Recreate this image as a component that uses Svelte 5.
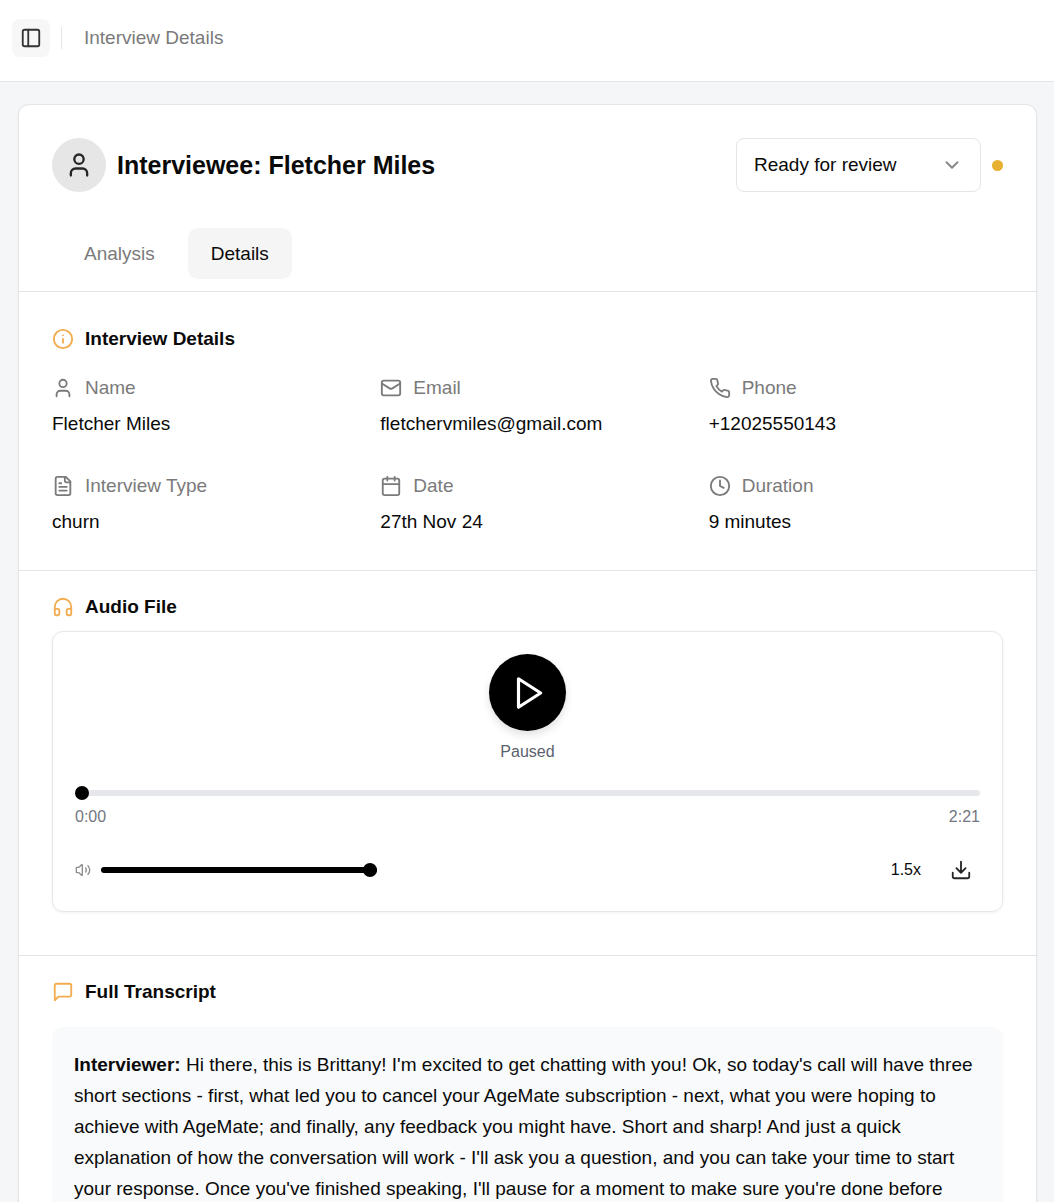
<script>
  const details = [
    { icon: 'user', label: 'Name', value: 'Fletcher Miles' },
    { icon: 'mail', label: 'Email', value: 'fletchervmiles@gmail.com' },
    { icon: 'phone', label: 'Phone', value: '+12025550143' },
    { icon: 'file', label: 'Interview Type', value: 'churn' },
    { icon: 'calendar', label: 'Date', value: '27th Nov 24' },
    { icon: 'clock', label: 'Duration', value: '9 minutes' }
  ];
  const tabs = ['Analysis', 'Details'];

  let activeTab = $state('Details');
  let status = $state('Ready for review');
  let playing = $state(false);
  let position = $state(0);
  let volume = $state(100);
</script>

{#snippet icon(name, size = 'md')}
  <svg class="icon {size}" viewBox="0 0 24 24" aria-hidden="true">
    {#if name === 'panel'}
      <rect x="3" y="3" width="18" height="18" rx="2" />
      <path d="M9 3v18" />
    {:else if name === 'user'}
      <path d="M19 21v-2a4 4 0 0 0-4-4H9a4 4 0 0 0-4 4v2" />
      <circle cx="12" cy="7" r="4" />
    {:else if name === 'mail'}
      <rect x="2" y="4" width="20" height="16" rx="2" />
      <path d="m22 7-8.97 5.7a1.94 1.94 0 0 1-2.06 0L2 7" />
    {:else if name === 'phone'}
      <path d="M22 16.92v3a2 2 0 0 1-2.18 2 19.79 19.79 0 0 1-8.63-3.07 19.5 19.5 0 0 1-6-6 19.79 19.79 0 0 1-3.07-8.67A2 2 0 0 1 4.11 2h3a2 2 0 0 1 2 1.72 12.84 12.84 0 0 0 .7 2.81 2 2 0 0 1-.45 2.11L8.09 9.91a16 16 0 0 0 6 6l1.27-1.27a2 2 0 0 1 2.11-.45 12.84 12.84 0 0 0 2.81.7A2 2 0 0 1 22 16.92z" />
    {:else if name === 'file'}
      <path d="M15 2H6a2 2 0 0 0-2 2v16a2 2 0 0 0 2 2h12a2 2 0 0 0 2-2V7Z" />
      <path d="M14 2v4a2 2 0 0 0 2 2h4M10 9H8M16 13H8M16 17H8" />
    {:else if name === 'calendar'}
      <rect x="3" y="4" width="18" height="18" rx="2" />
      <path d="M8 2v4M16 2v4M3 10h18" />
    {:else if name === 'clock'}
      <circle cx="12" cy="12" r="10" />
      <path d="M12 6v6l4 2" />
    {:else if name === 'info'}
      <circle cx="12" cy="12" r="10" />
      <path d="M12 16v-4M12 8h.01" />
    {:else if name === 'headphones'}
      <path d="M3 14h3a2 2 0 0 1 2 2v3a2 2 0 0 1-2 2H5a2 2 0 0 1-2-2v-7a9 9 0 0 1 18 0v7a2 2 0 0 1-2 2h-1a2 2 0 0 1-2-2v-3a2 2 0 0 1 2-2h3" />
    {:else if name === 'message'}
      <path d="M21 15a2 2 0 0 1-2 2H7l-4 4V5a2 2 0 0 1 2-2h14a2 2 0 0 1 2 2z" />
    {:else if name === 'play'}
      <path d="m6 3 14 9-14 9z" />
    {:else if name === 'pause'}
      <path d="M8 4v16M16 4v16" />
    {:else if name === 'volume'}
      <path d="M11 4.7a.7.7 0 0 0-1.2-.5L6.4 7.6A1.4 1.4 0 0 1 5.4 8H3a1 1 0 0 0-1 1v6a1 1 0 0 0 1 1h2.4a1.4 1.4 0 0 1 1 .4l3.4 3.4a.7.7 0 0 0 1.2-.5z" />
      <path d="M16 9a5 5 0 0 1 0 6M19.4 18.4a9 9 0 0 0 0-12.8" />
    {:else if name === 'download'}
      <path d="M21 15v4a2 2 0 0 1-2 2H5a2 2 0 0 1-2-2v-4M7 10l5 5 5-5M12 15V3" />
    {:else if name === 'chevron'}
      <path d="m6 9 6 6 6-6" />
    {/if}
  </svg>
{/snippet}

<div class="shell">
  <header class="topbar">
    <button class="toggle" type="button" aria-label="Toggle sidebar">{@render icon('panel')}</button>
    <span class="divider"></span>
    <span class="crumb">Interview Details</span>
  </header>

  <main>
    <article class="card">
      <div class="card-head">
        <div class="identity">
          <span class="avatar">{@render icon('user', 'lg')}</span>
          <h1>Interviewee: Fletcher Miles</h1>
          <div class="status">
            <select aria-label="Review status" bind:value={status}>
              <option>Ready for review</option>
              <option>Reviewed</option>
            </select>
            <span class="chevron">{@render icon('chevron')}</span>
          </div>
          <span class="dot"></span>
        </div>
        <div class="tabs" role="tablist">
          {#each tabs as tab}
            <button
              type="button"
              role="tab"
              aria-selected={activeTab === tab}
              class:active={activeTab === tab}
              onclick={() => (activeTab = tab)}>{tab}</button>
          {/each}
        </div>
      </div>

      <section class="details">
        <h2>{@render icon('info')}Interview Details</h2>
        <dl>
          {#each details as item}
            <div>
              <dt>{@render icon(item.icon)}{item.label}</dt>
              <dd>{item.value}</dd>
            </div>
          {/each}
        </dl>
      </section>

      <section class="audio">
        <h2>{@render icon('headphones')}Audio File</h2>
        <div class="player">
          <div class="playback">
            <button class="play" type="button" aria-label={playing ? 'Pause' : 'Play'} onclick={() => (playing = !playing)}>
              {@render icon(playing ? 'pause' : 'play', 'xl')}
            </button>
            <span>{playing ? 'Playing' : 'Paused'}</span>
          </div>
          <div class="progress">
            <input type="range" aria-label="Position" min="0" max="141" bind:value={position} />
            <div class="times"><span>0:00</span><span>2:21</span></div>
          </div>
          <div class="controls">
            <label class="volume">
              {@render icon('volume', 'sm')}
              <input class="filled" type="range" aria-label="Volume" min="0" max="100" bind:value={volume} style:--level="{volume}%" />
            </label>
            <button class="speed" type="button">1.5x</button>
            <button class="download" type="button" aria-label="Download">{@render icon('download')}</button>
          </div>
        </div>
      </section>

      <section class="transcript">
        <h2>{@render icon('message')}Full Transcript</h2>
        <div class="speech">
          <p>
            <strong>Interviewer:</strong> Hi there, this is Brittany! I'm excited to get chatting with you! Ok, so today's
            call will have three short sections - first, what led you to cancel your AgeMate subscription - next, what you
            were hoping to achieve with AgeMate; and finally, any feedback you might have. Short and sharp! And just a quick
            explanation of how the conversation will work - I'll ask you a question, and you can take your time to start
            your response. Once you've finished speaking, I'll pause for a moment to make sure you're done before
          </p>
        </div>
      </section>
    </article>
  </main>
</div>

<style>
  :global(body) {
    background: #f5f6f8;
  }

  .shell {
    height: 100vh;
    overflow: hidden;
    color: #0a0a0a;
    background: #f5f6f8;
    font: 19px/28px 'Liberation Sans', Arial, sans-serif;
  }

  h1,
  h2,
  p,
  dl,
  dd {
    margin: 0;
  }

  button,
  select {
    margin: 0;
    padding: 0;
    border: 0;
    color: inherit;
    background: none;
    font: inherit;
    cursor: pointer;
  }

  .icon {
    display: block;
    flex: none;
    width: 22px;
    height: 22px;
    fill: none;
    stroke: currentColor;
    stroke-width: 2;
    stroke-linecap: round;
    stroke-linejoin: round;
  }

  .icon.sm {
    width: 16px;
    height: 16px;
  }

  .icon.lg {
    width: 28px;
    height: 28px;
  }

  .icon.xl {
    width: 38px;
    height: 38px;
  }

  .topbar {
    display: flex;
    align-items: center;
    padding: 19px 12px 24px;
    border-bottom: 1px solid #e3e5e8;
    background: #fff;
  }

  .toggle {
    display: grid;
    place-items: center;
    width: 38px;
    height: 38px;
    border-radius: 8px;
    color: #333;
    background: #f7f7f7;
  }

  .divider {
    width: 1px;
    height: 22px;
    margin: 0 22px 0 11px;
    background: #e5e5e5;
  }

  .crumb {
    color: #7a7a7a;
  }

  main {
    padding: 22px 17px 22px 18px;
  }

  .card {
    border: 1px solid #e4e5e7;
    border-radius: 11px;
    background: #fff;
    box-shadow: 0 1px 3px rgb(0 0 0 / 5%);
  }

  .card-head {
    padding: 33px 33px 12px;
  }

  .identity {
    display: flex;
    align-items: center;
    gap: 11px;
  }

  .avatar {
    display: grid;
    place-items: center;
    width: 54px;
    height: 54px;
    border-radius: 50%;
    color: #262626;
    background: #e6e6e6;
  }

  h1 {
    flex: 1;
    font-size: 25px;
    line-height: 34px;
    font-weight: 700;
  }

  .status {
    position: relative;
    width: 245px;
  }

  .status select {
    display: block;
    width: 100%;
    height: 54px;
    padding: 0 44px 0 17px;
    border: 1px solid #e5e5e5;
    border-radius: 8px;
    background: #fff;
    appearance: none;
  }

  .chevron {
    position: absolute;
    top: 16px;
    right: 18px;
    color: #858585;
    pointer-events: none;
  }

  .dot {
    width: 11px;
    height: 11px;
    border-radius: 50%;
    background: #e8b030;
  }

  .tabs {
    display: flex;
    gap: 10px;
    margin-top: 36px;
    padding: 0 9px;
  }

  .tabs button {
    height: 51px;
    padding: 0 23px;
    border-radius: 10px;
    color: #7a7a7a;
  }

  .tabs .active {
    color: #0a0a0a;
    background: #f5f5f5;
  }

  section {
    padding: 22px 33px;
    border-top: 1px solid #e4e4e4;
  }

  h2 {
    display: flex;
    align-items: center;
    gap: 11px;
    font-size: 19px;
    line-height: 28px;
    font-weight: 700;
  }

  h2 .icon {
    color: #f2ac4f;
  }

  .details {
    padding: 33px 33px 34px;
  }

  dl {
    display: grid;
    grid-template-columns: repeat(3, 1fr);
    gap: 34px;
    margin-top: 21px;
  }

  dt {
    display: flex;
    align-items: center;
    gap: 11px;
    color: #7a7a7a;
  }

  dd {
    margin-top: 8px;
  }

  .audio {
    padding-bottom: 43px;
  }

  .player {
    display: flex;
    flex-direction: column;
    gap: 23px;
    margin-top: 10px;
    padding: 22px;
    border: 1px solid #e5e7eb;
    border-radius: 11px;
    box-shadow: 0 1px 3px rgb(0 0 0 / 6%);
    font-size: 16px;
    line-height: 22px;
  }

  .playback {
    display: flex;
    flex-direction: column;
    align-items: center;
    gap: 10px;
    color: #5b616c;
  }

  .play {
    display: grid;
    place-items: center;
    width: 77px;
    height: 77px;
    border-radius: 50%;
    color: #fff;
    background: #000;
    box-shadow: 0 4px 8px rgb(0 0 0 / 12%);
  }

  input[type='range'] {
    display: block;
    width: 100%;
    height: 14px;
    margin: 0;
    background: none;
    appearance: none;
  }

  input[type='range']::-webkit-slider-runnable-track {
    height: 6px;
    border-radius: 3px;
    background: #e5e7eb;
  }

  input.filled::-webkit-slider-runnable-track {
    background: linear-gradient(to right, #000 var(--level), #e5e7eb var(--level));
  }

  input[type='range']::-webkit-slider-thumb {
    width: 14px;
    height: 14px;
    margin-top: -4px;
    border-radius: 50%;
    background: #000;
    appearance: none;
  }

  .times {
    display: flex;
    justify-content: space-between;
    margin-top: 6px;
    color: #737781;
  }

  .controls {
    display: flex;
    align-items: center;
  }

  .volume {
    display: flex;
    flex: none;
    align-items: center;
    gap: 10px;
    width: 33.4%;
    margin-right: auto;
    color: #8c8c8c;
  }

  .speed {
    height: 38px;
    padding: 0 11px;
  }

  .download {
    display: grid;
    place-items: center;
    width: 38px;
    height: 38px;
    margin-left: 10px;
    color: #262626;
  }

  .speech {
    margin-top: 21px;
    padding: 22px;
    border-radius: 11px;
    background: #f9fafb;
    line-height: 31px;
  }
</style>
